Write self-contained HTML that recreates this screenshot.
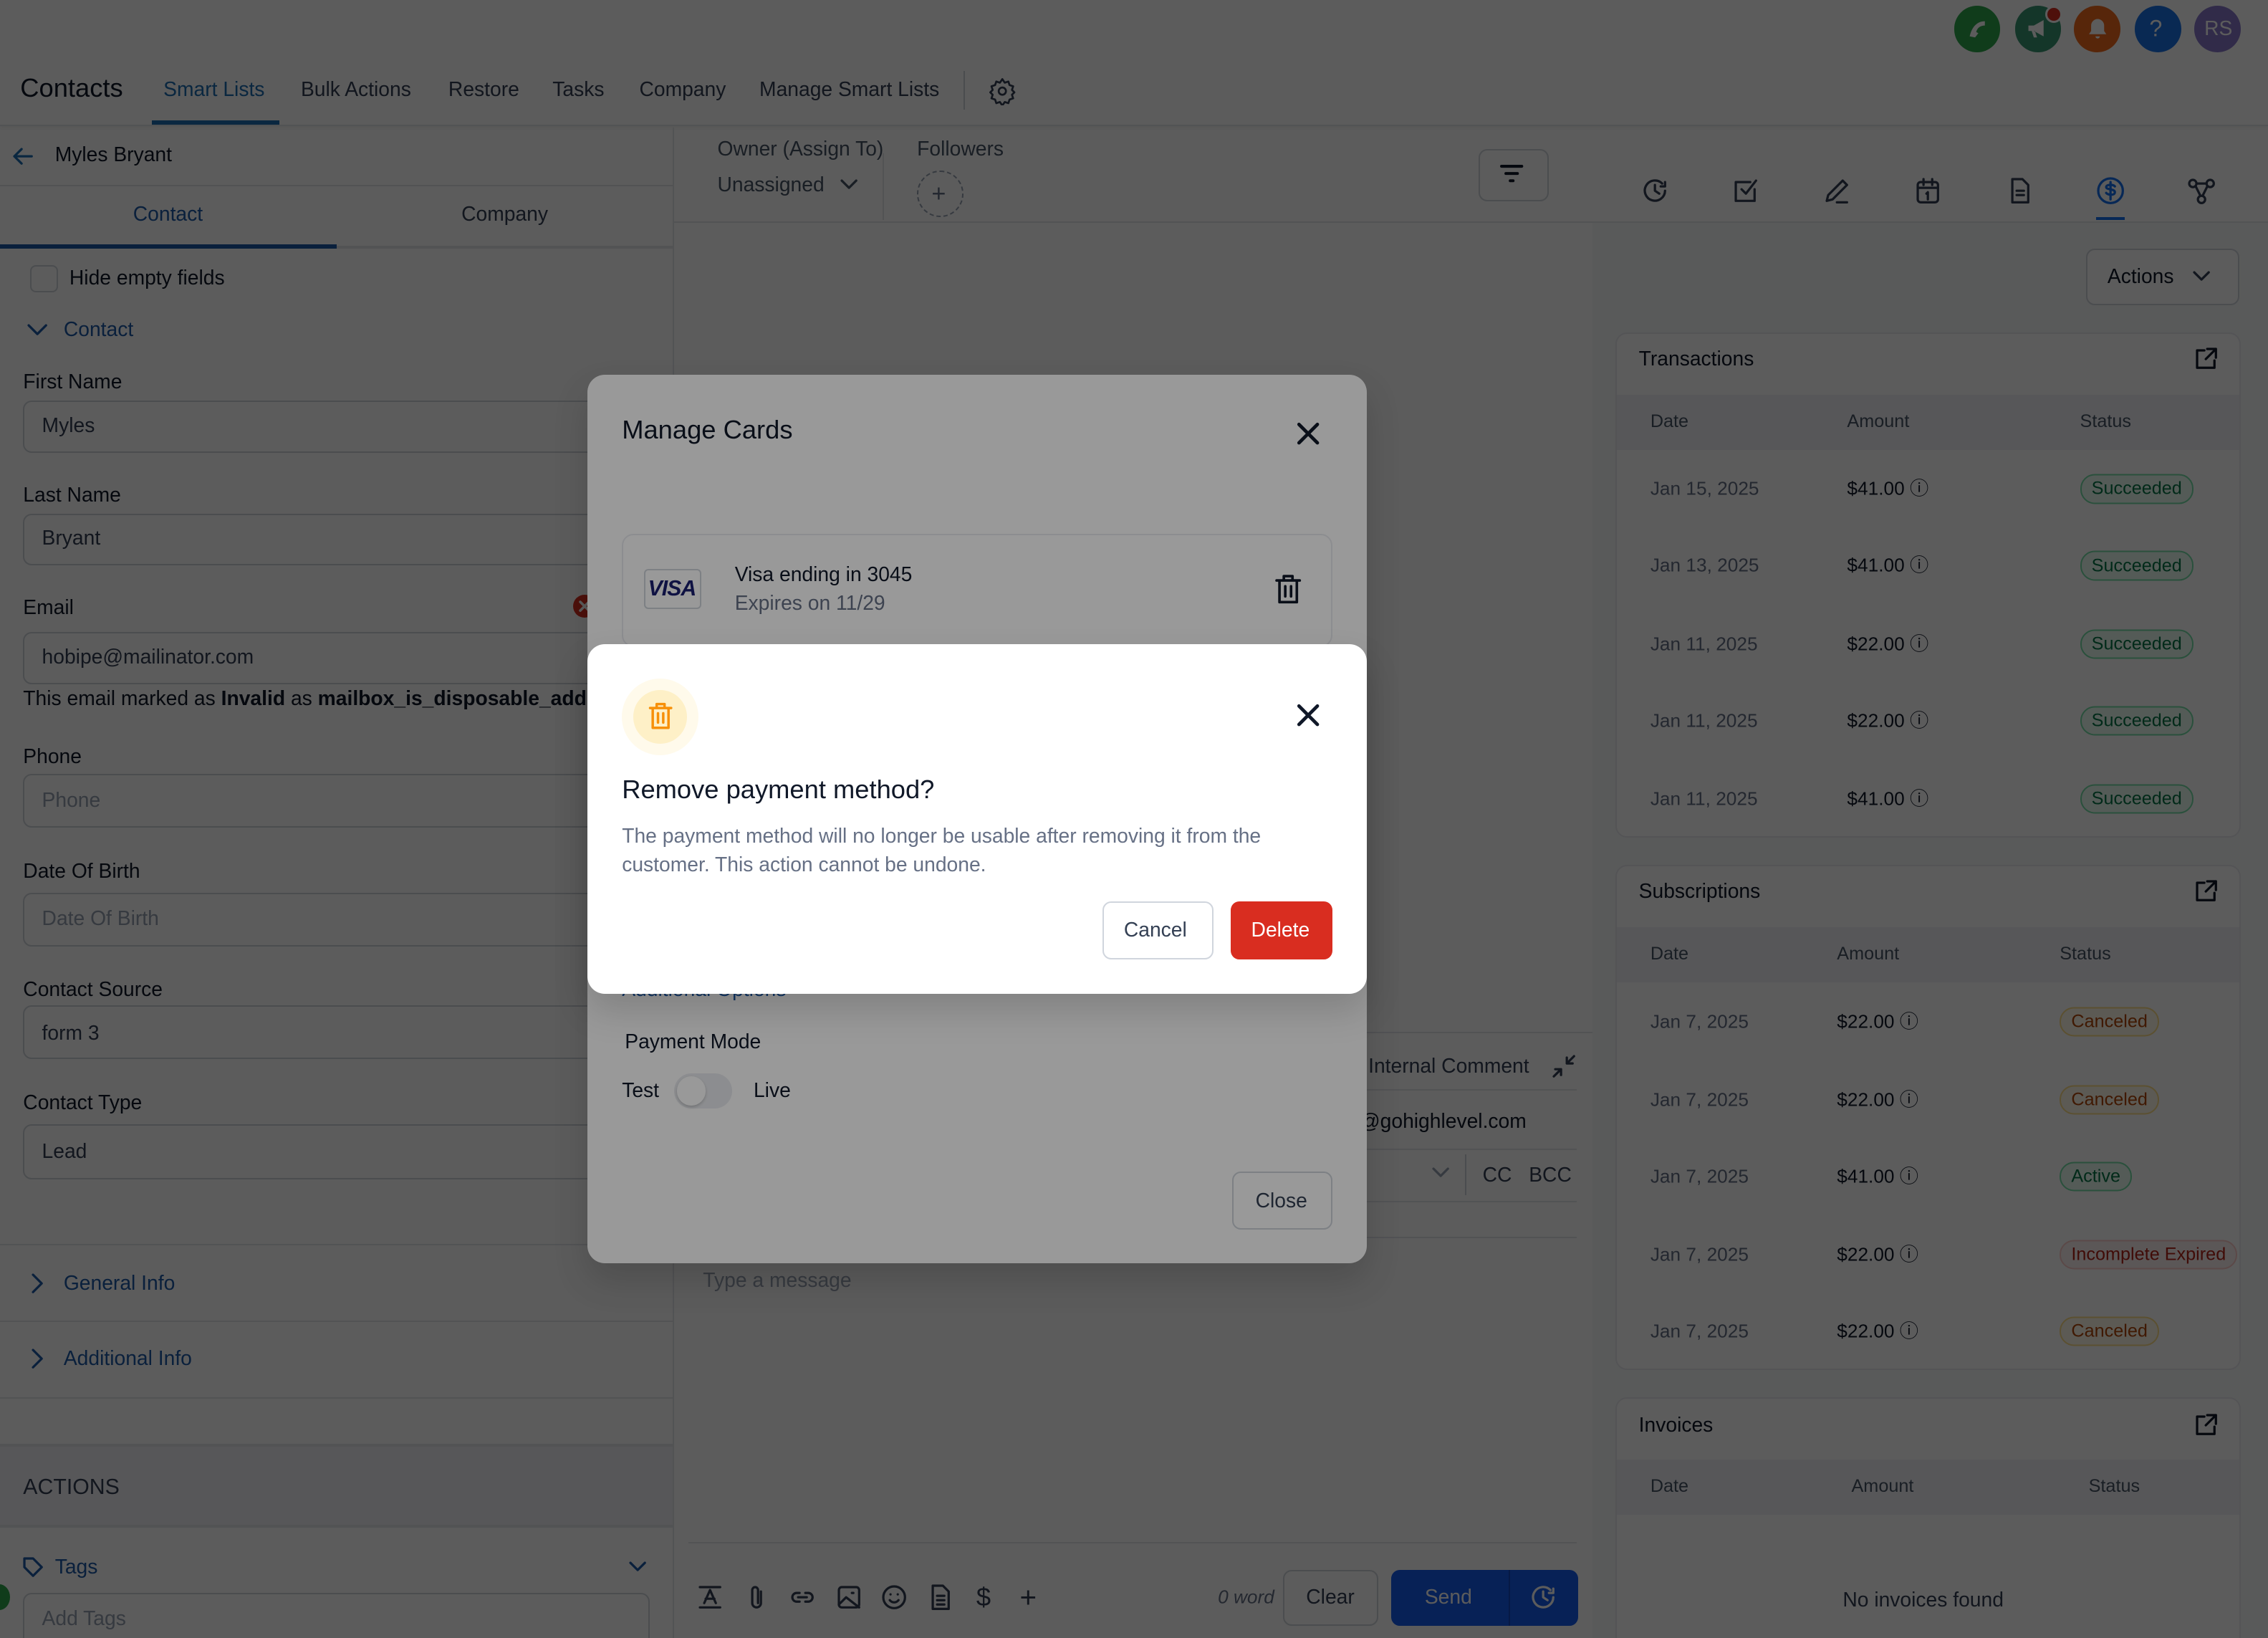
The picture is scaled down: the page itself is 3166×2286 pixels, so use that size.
<!DOCTYPE html>
<html><head><meta charset="utf-8">
<style>
*{box-sizing:border-box;margin:0;padding:0}
html,body{width:3166px;height:2286px;overflow:hidden;background:#fff}
#root{position:relative;width:1568px;height:1132px;zoom:2.01913;font-family:"Liberation Sans",sans-serif;color:#101828;overflow:hidden;background:#fff}
.a{position:absolute}
.t{position:absolute;transform:translateY(-50%);white-space:nowrap;line-height:1.2}
.inp{position:absolute;left:16px;width:433px;border:1px solid #d0d5dd;border-radius:6px;background:#fff}
.lbl{font-size:14px;color:#101828;font-weight:500}
.ival{font-size:14px;color:#344054}
.ph{font-size:14px;color:#98a2b3}
.hr{position:absolute;height:1px;background:#e4e7ec}
.ico{position:absolute;fill:none;stroke:#344054;stroke-width:1.6;stroke-linecap:round;stroke-linejoin:round}
.card{position:absolute;left:1117px;width:432px;background:#fff;border:1px solid #eaecf0;border-radius:8px;overflow:hidden}
.badge{position:absolute;transform:translateY(-50%);font-size:12.5px;padding:2px 7px;border-radius:10px;border:1px solid;white-space:nowrap}
.suc{color:#067647;border-color:#75e0a7;background:#ecfdf3}
.can{color:#b54708;border-color:#fedf89;background:#fffaeb}
.err{color:#b42318;border-color:#fecdca;background:#fef3f2}
.dt{font-size:13px;color:#667085}
.am{font-size:13px;color:#101828}
.th{font-size:12.5px;color:#475467}
.ov{position:absolute;left:0;top:0;width:1568px;height:1132px;background:rgba(0,0,0,.4)}
</style></head><body><div id="root">

<div class="a" style="left:0;top:0;width:1568px;height:87px;background:#fff;border-bottom:1px solid #e4e7ec;box-shadow:0 1px 3px rgba(0,0,0,.08)"></div>
<div class="a" style="left:1351px;top:4px;width:32px;height:32px;border-radius:50%;background:#2ea84d"></div>
<svg class="a" style="left:1358px;top:11px" width="18" height="18" viewBox="0 0 24 24"><path d="M5 19c2-9 7-14 14-14v4c-4 0-7 2-8 6l2 1-3 4z" fill="#fff"/></svg>
<div class="a" style="left:1393px;top:4px;width:32px;height:32px;border-radius:50%;background:#3a9673"></div>
<svg class="a" style="left:1400px;top:11px" width="18" height="18" viewBox="0 0 24 24"><path d="M3 9h5l9-5v15l-9-5H3zM6 14l2 6h3l-2-6" fill="#fff"/></svg>
<div class="a" style="left:1414px;top:4px;width:12px;height:12px;border-radius:50%;background:#d92d20;border:1.5px solid #fff"></div>
<div class="a" style="left:1434px;top:4px;width:32px;height:32px;border-radius:50%;background:#f26b1d"></div>
<svg class="a" style="left:1441px;top:11px" width="18" height="18" viewBox="0 0 24 24"><path d="M12 3a6 6 0 0 0-6 6v5l-2 3h16l-2-3V9a6 6 0 0 0-6-6zM10 19a2 2 0 0 0 4 0z" fill="#fff"/></svg>
<div class="a" style="left:1476px;top:4px;width:32px;height:32px;border-radius:50%;background:#1a73e8"></div>
<div class="t" style="left:1486px;top:20px;color:#fff;font-size:16px">?</div>
<div class="a" style="left:1517px;top:4px;width:32px;height:32px;border-radius:50%;background:#8b7bcc"></div>
<div class="t" style="left:1524px;top:20px;color:#fff;font-size:14px">RS</div>

<div class="t" style="left:14px;top:61px;font-size:18px;font-weight:500;color:#101828">Contacts</div>
<div class="t" style="left:113px;top:62px;font-size:14px;color:#1e6fb5">Smart Lists</div>
<div class="a" style="left:105px;top:83px;width:88px;height:3px;background:#1e6fb5"></div>
<div class="t" style="left:208px;top:62px;font-size:14px;color:#344054">Bulk Actions</div>
<div class="t" style="left:310px;top:62px;font-size:14px;color:#344054">Restore</div>
<div class="t" style="left:382px;top:62px;font-size:14px;color:#344054">Tasks</div>
<div class="t" style="left:442px;top:62px;font-size:14px;color:#344054">Company</div>
<div class="t" style="left:525px;top:62px;font-size:14px;color:#344054">Manage Smart Lists</div>
<div class="a" style="left:666px;top:49px;width:1px;height:27px;background:#d0d5dd"></div>
<svg class="ico" style="left:683px;top:53px" width="20" height="20" viewBox="0 0 24 24"><circle cx="12" cy="12" r="3"/><path d="M12 2l2 3 3-1 1 3 3 1-1 3 2 2-2 2 1 3-3 1-1 3-3-1-2 3-2-3-3 1-1-3-3-1 1-3-2-2 2-2-1-3 3-1 1-3 3 1z"/></svg>

<div class="a" style="left:465px;top:88px;width:1px;height:1044px;background:#e4e7ec"></div>
<svg class="ico" style="left:8px;top:100px;stroke:#1e6fb5" width="16" height="16" viewBox="0 0 16 16"><path d="M14 8H2M7 3L2 8l5 5"/></svg>
<div class="t" style="left:38px;top:107px;font-size:14px;color:#101828">Myles Bryant</div>
<div class="hr" style="left:0;top:128px;width:465px"></div>
<div class="t" style="left:92px;top:148px;font-size:14px;color:#1e5aa8">Contact</div>
<div class="t" style="left:319px;top:148px;font-size:14px;color:#344054">Company</div>
<div class="hr" style="left:0;top:170px;width:465px;height:2px"></div>
<div class="a" style="left:0;top:169px;width:233px;height:3px;background:#1e5aa8"></div>
<div class="a" style="left:21px;top:183px;width:19px;height:19px;border:1px solid #d0d5dd;border-radius:4px"></div>
<div class="t" style="left:48px;top:192px;font-size:14px;color:#101828">Hide empty fields</div>
<svg class="ico" style="left:18px;top:221px;stroke:#1e5aa8" width="16" height="14" viewBox="0 0 16 14"><path d="M2 4l6 6 6-6"/></svg>
<div class="t" style="left:44px;top:228px;font-size:14px;color:#1e5aa8">Contact</div>

<div class="t lbl" style="left:16px;top:264px">First Name</div>
<div class="inp" style="top:277px;height:36px"></div><div class="t ival" style="left:29px;top:294px">Myles</div>
<div class="t lbl" style="left:16px;top:342px">Last Name</div>
<div class="inp" style="top:355px;height:36px"></div><div class="t ival" style="left:29px;top:372px">Bryant</div>
<div class="t lbl" style="left:16px;top:420px">Email</div>
<div class="a" style="left:396px;top:411px;width:16px;height:16px;border-radius:50%;background:#d92d20"></div>
<svg class="ico" style="left:400px;top:415px;stroke:#fff;stroke-width:1.8" width="8" height="8" viewBox="0 0 8 8"><path d="M1 1l6 6M7 1L1 7"/></svg>
<div class="inp" style="top:437px;height:36px"></div><div class="t ival" style="left:29px;top:454px">hobipe@mailinator.com</div>
<div class="t" style="left:16px;top:483px;font-size:14px;color:#101828">This email marked as <b>Invalid</b> as <b>mailbox_is_disposable_address</b></div>
<div class="t lbl" style="left:16px;top:523px">Phone</div>
<div class="inp" style="top:535px;height:37px"></div><div class="t ph" style="left:29px;top:553px">Phone</div>
<div class="t lbl" style="left:16px;top:602px">Date Of Birth</div>
<div class="inp" style="top:617px;height:37px"></div><div class="t ph" style="left:29px;top:635px">Date Of Birth</div>
<div class="t lbl" style="left:16px;top:684px">Contact Source</div>
<div class="inp" style="top:695px;height:37px"></div><div class="t ival" style="left:29px;top:714px">form 3</div>
<div class="t lbl" style="left:16px;top:762px">Contact Type</div>
<div class="inp" style="top:777px;height:38px"></div><div class="t ival" style="left:29px;top:796px">Lead</div>

<div class="hr" style="left:0;top:860px;width:465px"></div>
<svg class="ico" style="left:19px;top:879px;stroke:#1e5aa8" width="14" height="16" viewBox="0 0 14 16"><path d="M4 2l6 6-6 6"/></svg>
<div class="t" style="left:44px;top:887px;font-size:14px;color:#1e5aa8">General Info</div>
<div class="hr" style="left:0;top:913px;width:465px"></div>
<svg class="ico" style="left:19px;top:931px;stroke:#1e5aa8" width="14" height="16" viewBox="0 0 14 16"><path d="M4 2l6 6-6 6"/></svg>
<div class="t" style="left:44px;top:939px;font-size:14px;color:#1e5aa8">Additional Info</div>
<div class="hr" style="left:0;top:966px;width:465px"></div>
<div class="a" style="left:0;top:998px;width:465px;height:58px;background:#f2f4f7;border-top:2px solid #e4e7ec;border-bottom:2px solid #e4e7ec"></div>
<div class="t" style="left:16px;top:1028px;font-size:15px;color:#344054">ACTIONS</div>
<svg class="ico" style="left:15px;top:1075px;stroke:#1e5aa8" width="16" height="16" viewBox="0 0 16 16"><path d="M2 2h6l6 6-6 6-6-6z"/></svg>
<div class="t" style="left:38px;top:1083px;font-size:14px;color:#1e5aa8">Tags</div>
<svg class="ico" style="left:434px;top:1077px;stroke:#1e5aa8" width="14" height="12" viewBox="0 0 14 12"><path d="M2 3l5 5 5-5"/></svg>
<div class="inp" style="top:1101px;height:40px"></div><div class="t ph" style="left:29px;top:1119px">Add Tags</div>
<div class="a" style="left:-8px;top:1095px;width:15px;height:18px;border-radius:50%;background:#2ea84d"></div>

<div class="t" style="left:496px;top:103px;font-size:14px;color:#475467">Owner (Assign To)</div>
<div class="t" style="left:496px;top:128px;font-size:14px;color:#475467">Unassigned</div>
<svg class="ico" style="left:580px;top:122px;stroke:#475467" width="14" height="12" viewBox="0 0 14 12"><path d="M2 3l5 5 5-5"/></svg>
<div class="a" style="left:610px;top:106px;width:1px;height:46px;background:#e4e7ec"></div>
<div class="t" style="left:634px;top:103px;font-size:14px;color:#475467">Followers</div>
<div class="a" style="left:634px;top:118px;width:32px;height:32px;border-radius:50%;border:1px dashed #98a2b3"></div>
<div class="t" style="left:644px;top:134px;font-size:17px;color:#667085">+</div>
<div class="a" style="left:1022px;top:103px;width:49px;height:36px;border:1px solid #d0d5dd;border-radius:6px"></div>
<svg class="a" style="left:1035px;top:112px" width="20" height="18" viewBox="0 0 20 18"><path d="M3 3h14M6 8h8M9 13h2" stroke="#101828" stroke-width="2" stroke-linecap="round"/></svg>
<div class="hr" style="left:466px;top:153px;width:1102px"></div>

<div class="hr" style="left:466px;top:713px;width:636px"></div>
<div class="t" style="left:946px;top:737px;font-size:14px;color:#344054">Internal Comment</div>
<svg class="ico" style="left:1073px;top:729px" width="16" height="16" viewBox="0 0 16 16"><path d="M10 6l5-5M10 2v4h4M6 10l-5 5M2 10h4v4"/></svg>
<div class="hr" style="left:466px;top:753px;width:624px"></div>
<div class="t" style="left:940px;top:775px;font-size:14px;color:#101828">@gohighlevel.com</div>
<div class="hr" style="left:466px;top:794px;width:624px"></div>
<svg class="ico" style="left:989px;top:806px;stroke:#98a2b3" width="14" height="10" viewBox="0 0 14 10"><path d="M2 2l5 5 5-5"/></svg>
<div class="a" style="left:1013px;top:798px;width:1px;height:28px;background:#d0d5dd"></div>
<div class="t" style="left:1025px;top:812px;font-size:14px;color:#344054">CC</div>
<div class="t" style="left:1057px;top:812px;font-size:14px;color:#344054">BCC</div>
<div class="hr" style="left:466px;top:830px;width:624px"></div>
<div class="hr" style="left:466px;top:855px;width:624px"></div>
<div class="t" style="left:486px;top:885px;font-size:14px;color:#98a2b3">Type a message</div>
<div class="hr" style="left:476px;top:1066px;width:614px"></div>
<svg class="ico" style="left:482px;top:1095px" width="18" height="18" viewBox="0 0 18 18"><path d="M2 2h14M5 13l4-9 4 9M6 10h6M2 16h14"/></svg>
<svg class="ico" style="left:515px;top:1095px" width="16" height="18" viewBox="0 0 16 18"><path d="M11 5v8a3 3 0 0 1-6 0V4a2 2 0 0 1 4 0v9"/></svg>
<svg class="ico" style="left:546px;top:1095px" width="18" height="18" viewBox="0 0 18 18"><path d="M7 6H5a3 3 0 0 0 0 6h2M11 6h2a3 3 0 0 1 0 6h-2M6 9h6"/></svg>
<svg class="ico" style="left:578px;top:1095px" width="18" height="18" viewBox="0 0 18 18"><rect x="2" y="2" width="14" height="14" rx="2"/><path d="M2 14l5-5 9 7M11 6h1"/></svg>
<svg class="ico" style="left:609px;top:1095px" width="18" height="18" viewBox="0 0 18 18"><circle cx="9" cy="9" r="7.5"/><path d="M6 11c1.5 2 4.5 2 6 0M6.5 7h0M11.5 7h0"/></svg>
<svg class="ico" style="left:641px;top:1095px" width="18" height="18" viewBox="0 0 18 18"><path d="M4 1h7l4 4v12H4zM7 8h5M7 11h5M7 14h5"/></svg>
<div class="t" style="left:675px;top:1104px;font-size:18px;color:#344054">$</div>
<div class="t" style="left:705px;top:1104px;font-size:20px;color:#344054">+</div>
<div class="t" style="left:842px;top:1104px;font-size:13px;color:#667085;font-style:italic">0 word</div>
<div class="a" style="left:887px;top:1085px;width:66px;height:39px;border:1px solid #d0d5dd;border-radius:6px"></div>
<div class="t" style="left:903px;top:1104px;font-size:14px;color:#344054">Clear</div>
<div class="a" style="left:962px;top:1085px;width:129px;height:39px;background:#155eef;border-radius:6px"></div>
<div class="a" style="left:1043px;top:1085px;width:1px;height:39px;background:#1249c2"></div>
<div class="t" style="left:985px;top:1104px;font-size:14px;color:#fff">Send</div>
<svg class="ico" style="left:1058px;top:1095px;stroke:#fff" width="18" height="18" viewBox="0 0 18 18"><path d="M16 9a7 7 0 1 1-2-5M9 5v4l3 2M16 3v3h-3"/></svg>

<div class="a" style="left:1101px;top:154px;width:467px;height:978px;background:#f9fafb"></div>
<svg class="ico" style="left:1134px;top:122px" width="20" height="20" viewBox="0 0 20 20"><path d="M17 10a7 7 0 1 1-2-5M10 6v4l3 2M17 4v3h-3"/></svg>
<svg class="ico" style="left:1197px;top:122px" width="20" height="20" viewBox="0 0 20 20"><path d="M16 9v8H3V4h10M7 9l3 3 7-9"/></svg>
<svg class="ico" style="left:1260px;top:122px" width="20" height="20" viewBox="0 0 20 20"><path d="M3 17l1-4 10-10 3 3-10 10zM10 18h7"/></svg>
<svg class="ico" style="left:1323px;top:122px" width="20" height="20" viewBox="0 0 20 20"><rect x="3" y="4" width="14" height="14" rx="2"/><path d="M3 8h14M7 2v4M13 2v4M9 12l1-1v5"/></svg>
<svg class="ico" style="left:1386px;top:122px" width="20" height="20" viewBox="0 0 20 20"><path d="M5 2h7l4 4v12H5zM8 10h5M8 13h5"/></svg>
<svg class="ico" style="left:1449px;top:122px;stroke:#1570ef" width="20" height="20" viewBox="0 0 20 20"><circle cx="10" cy="10" r="8.5"/><path d="M13 7c-1-1.5-6-1.5-6 .5s6 1 6 3.5-5 2-6 .5M10 4v12"/></svg>
<div class="a" style="left:1449px;top:150px;width:20px;height:2px;background:#1570ef"></div>
<svg class="ico" style="left:1512px;top:122px" width="20" height="20" viewBox="0 0 20 20"><circle cx="4" cy="5" r="2.5"/><circle cx="16" cy="5" r="2.5"/><circle cx="10" cy="16" r="2.5"/><path d="M6 7l3 6M14 7l-3 6M6.5 5h7"/></svg>

<div class="a" style="left:1442px;top:172px;width:106px;height:39px;border:1px solid #d0d5dd;border-radius:6px;background:#fff"></div>
<div class="t" style="left:1457px;top:191px;font-size:14px;color:#101828">Actions</div>
<svg class="ico" style="left:1515px;top:185px" width="14" height="12" viewBox="0 0 14 12"><path d="M2 3l5 5 5-5"/></svg>

<div class="card" style="top:230px;height:349px">
 <div class="a" style="left:0;top:42px;width:432px;height:38px;background:#f2f4f7"></div>
</div>
<div class="t" style="left:1133px;top:248px;font-size:14px;font-weight:500">Transactions</div>
<svg class="ico" style="left:1517px;top:240px;stroke:#101828" width="16" height="16" viewBox="0 0 16 16"><path d="M7 2H2v12h12V9M9 1h6v6M15 1L8 8"/></svg>
<div class="t th" style="left:1141px;top:291px">Date</div><div class="t th" style="left:1277px;top:291px">Amount</div><div class="t th" style="left:1438px;top:291px">Status</div>

<div class="t dt" style="left:1141px;top:338px">Jan 15, 2025</div><div class="t am" style="left:1277px;top:338px">$41.00 ⓘ</div><div class="badge suc" style="left:1438px;top:338px">Succeeded</div>
<div class="t dt" style="left:1141px;top:391px">Jan 13, 2025</div><div class="t am" style="left:1277px;top:391px">$41.00 ⓘ</div><div class="badge suc" style="left:1438px;top:391px">Succeeded</div>
<div class="t dt" style="left:1141px;top:445px">Jan 11, 2025</div><div class="t am" style="left:1277px;top:445px">$22.00 ⓘ</div><div class="badge suc" style="left:1438px;top:445px">Succeeded</div>
<div class="t dt" style="left:1141px;top:498px">Jan 11, 2025</div><div class="t am" style="left:1277px;top:498px">$22.00 ⓘ</div><div class="badge suc" style="left:1438px;top:498px">Succeeded</div>
<div class="t dt" style="left:1141px;top:552px">Jan 11, 2025</div><div class="t am" style="left:1277px;top:552px">$41.00 ⓘ</div><div class="badge suc" style="left:1438px;top:552px">Succeeded</div>

<div class="card" style="top:598px;height:349px">
 <div class="a" style="left:0;top:42px;width:432px;height:38px;background:#f2f4f7"></div>
</div>
<div class="t" style="left:1133px;top:616px;font-size:14px;font-weight:500">Subscriptions</div>
<svg class="ico" style="left:1517px;top:608px;stroke:#101828" width="16" height="16" viewBox="0 0 16 16"><path d="M7 2H2v12h12V9M9 1h6v6M15 1L8 8"/></svg>
<div class="t th" style="left:1141px;top:659px">Date</div><div class="t th" style="left:1270px;top:659px">Amount</div><div class="t th" style="left:1424px;top:659px">Status</div>
<div class="t dt" style="left:1141px;top:706px">Jan 7, 2025</div><div class="t am" style="left:1270px;top:706px">$22.00 ⓘ</div><div class="badge can" style="left:1424px;top:706px">Canceled</div>
<div class="t dt" style="left:1141px;top:760px">Jan 7, 2025</div><div class="t am" style="left:1270px;top:760px">$22.00 ⓘ</div><div class="badge can" style="left:1424px;top:760px">Canceled</div>
<div class="t dt" style="left:1141px;top:813px">Jan 7, 2025</div><div class="t am" style="left:1270px;top:813px">$41.00 ⓘ</div><div class="badge suc" style="left:1424px;top:813px">Active</div>
<div class="t dt" style="left:1141px;top:867px">Jan 7, 2025</div><div class="t am" style="left:1270px;top:867px">$22.00 ⓘ</div><div class="badge err" style="left:1424px;top:867px">Incomplete Expired</div>
<div class="t dt" style="left:1141px;top:920px">Jan 7, 2025</div><div class="t am" style="left:1270px;top:920px">$22.00 ⓘ</div><div class="badge can" style="left:1424px;top:920px">Canceled</div>

<div class="card" style="top:966px;height:200px">
 <div class="a" style="left:0;top:42px;width:432px;height:38px;background:#f2f4f7"></div>
</div>
<div class="t" style="left:1133px;top:985px;font-size:14px;font-weight:500">Invoices</div>
<svg class="ico" style="left:1517px;top:977px;stroke:#101828" width="16" height="16" viewBox="0 0 16 16"><path d="M7 2H2v12h12V9M9 1h6v6M15 1L8 8"/></svg>
<div class="t th" style="left:1141px;top:1027px">Date</div><div class="t th" style="left:1280px;top:1027px">Amount</div><div class="t th" style="left:1444px;top:1027px">Status</div>
<div class="t" style="left:1274px;top:1106px;font-size:14px;color:#344054">No invoices found</div>

<div class="ov"></div>

<div class="a" style="left:406px;top:259px;width:539px;height:614px;background:#fff;border-radius:12px;box-shadow:0 12px 24px rgba(0,0,0,.15)"></div>
<div class="t" style="left:430px;top:297px;font-size:18px;font-weight:500;color:#101828">Manage Cards</div>
<svg class="ico" style="left:896px;top:291px;stroke:#101828;stroke-width:2.2" width="17" height="17" viewBox="0 0 16 16"><path d="M2 2l12 12M14 2L2 14"/></svg>
<div class="a" style="left:430px;top:369px;width:491px;height:78px;border:1px solid #eaecf0;border-radius:8px"></div>
<div class="a" style="left:445px;top:393px;width:40px;height:28px;border:1px solid #d0d5dd;border-radius:3px;background:#fff"></div>
<div class="t" style="left:448px;top:407px;font-size:15px;font-weight:bold;font-style:italic;color:#1a1f71;letter-spacing:-.5px">VISA</div>
<div class="t" style="left:508px;top:397px;font-size:14px;color:#101828">Visa ending in 3045</div>
<div class="t" style="left:508px;top:417px;font-size:14px;color:#667085">Expires on 11/29</div>
<svg class="ico" style="left:880px;top:396px;stroke:#101828;stroke-width:1.8" width="21" height="22" viewBox="0 0 20 22"><path d="M2 5h16M7 5V2h6v3M4 5v15h12V5M8 9v7M12 9v7"/></svg>
<div class="t" style="left:430px;top:684px;font-size:14px;color:#1e5aa8">Additional Options</div>
<div class="t" style="left:432px;top:720px;font-size:14px;font-weight:500;color:#101828">Payment Mode</div>
<div class="t" style="left:430px;top:754px;font-size:14px;color:#101828">Test</div>
<div class="a" style="left:466px;top:742px;width:40px;height:24px;border-radius:12px;background:#eaecf0"></div>
<div class="a" style="left:468px;top:744px;width:20px;height:20px;border-radius:50%;background:#fff;box-shadow:0 1px 2px rgba(0,0,0,.2)"></div>
<div class="t" style="left:521px;top:754px;font-size:14px;color:#101828">Live</div>
<div class="a" style="left:852px;top:810px;width:69px;height:40px;border:1px solid #d0d5dd;border-radius:6px"></div>
<div class="t" style="left:868px;top:830px;font-size:14px;color:#344054">Close</div>

<div class="ov"></div>

<div class="a" style="left:406px;top:445px;width:539px;height:242px;background:#fff;border-radius:12px;box-shadow:0 12px 24px rgba(0,0,0,.15)"></div>
<div class="a" style="left:430px;top:469px;width:53px;height:53px;border-radius:50%;background:#fffaeb"></div>
<div class="a" style="left:438px;top:477px;width:37px;height:37px;border-radius:50%;background:#fef0c7"></div>
<svg class="ico" style="left:447px;top:485px;stroke:#f79009;stroke-width:1.9" width="19" height="20" viewBox="0 0 20 22"><path d="M2 5h16M7 5V2h6v3M4 5v15h12V5M8 9v7M12 9v7"/></svg>
<svg class="ico" style="left:896px;top:486px;stroke:#101828;stroke-width:2.2" width="17" height="17" viewBox="0 0 16 16"><path d="M2 2l12 12M14 2L2 14"/></svg>
<div class="t" style="left:430px;top:546px;font-size:18px;font-weight:500;color:#101828">Remove payment method?</div>
<div class="t" style="left:430px;top:578px;font-size:14px;color:#667085">The payment method will no longer be usable after removing it from the</div>
<div class="t" style="left:430px;top:598px;font-size:14px;color:#667085">customer. This action cannot be undone.</div>
<div class="a" style="left:762px;top:623px;width:77px;height:40px;border:1px solid #d0d5dd;border-radius:6px"></div>
<div class="t" style="left:777px;top:643px;font-size:14px;color:#344054">Cancel</div>
<div class="a" style="left:851px;top:623px;width:70px;height:40px;background:#d92d20;border-radius:6px"></div>
<div class="t" style="left:865px;top:643px;font-size:14px;color:#fff">Delete</div>

</div></body></html>
